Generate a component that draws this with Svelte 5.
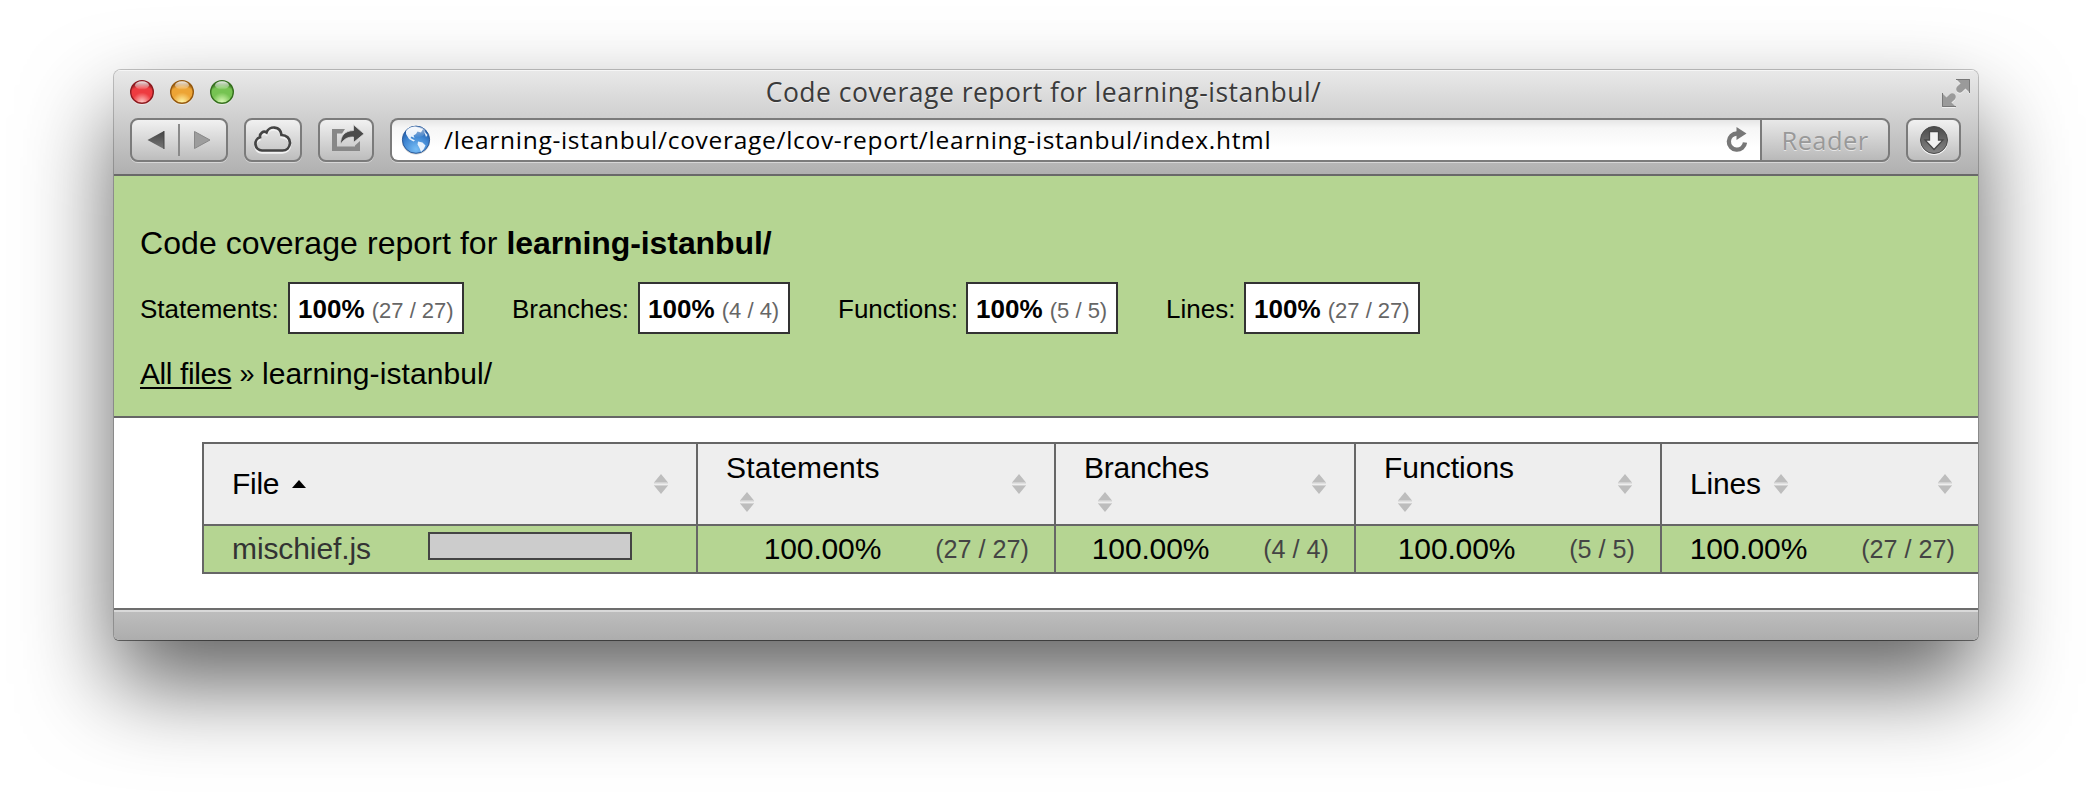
<script>
  const metrics = [
    { label: 'Statements', hits: '27 / 27', labelWidth: 148, boxWidth: 176 },
    { label: 'Branches', hits: '4 / 4', labelWidth: 126, boxWidth: 152 },
    { label: 'Functions', hits: '5 / 5', labelWidth: 128, boxWidth: 152 },
    { label: 'Lines', hits: '27 / 27', labelWidth: 78, boxWidth: 176 }
  ];
  const lights = [
    { name: 'red', edge: '#8c1a1f', main: '#ee3b40', glow: '#ffc9c6' },
    { name: 'amber', edge: '#95590f', main: '#eda435', glow: '#fff6a8' },
    { name: 'green', edge: '#36701f', main: '#76c352', glow: '#dcfbb8' }
  ];
</script>

{#snippet sorter()}
  <svg class="sorter" width="14" height="20" viewBox="0 0 14 20">
    <path d="M7 0 14 8.6H0zM0 11.6h14L7 20z" fill="#bdbdbd" />
    <path d="M0 8h14v1.6H0zM0 11h14v1H0z" fill="#d2d2d2" />
  </svg>
{/snippet}

<div class="desktop">
  <div class="window">
    <div class="chrome">
      <div class="titlebar">
        <div class="lights">
          {#each lights as l}
            <svg width="26" height="26" viewBox="0 0 26 26">
              <defs>
                <radialGradient id="g-{l.name}" cx=".5" cy=".95" r=".85">
                  <stop offset="0" stop-color={l.glow} />
                  <stop offset=".5" stop-color={l.main} />
                  <stop offset=".8" stop-color={l.main} />
                  <stop offset="1" stop-color={l.edge} />
                </radialGradient>
                <linearGradient id="s-{l.name}" x2="0" y2="1">
                  <stop offset="0" stop-color="#fff" stop-opacity=".9" />
                  <stop offset="1" stop-color="#fff" stop-opacity=".08" />
                </linearGradient>
              </defs>
              <circle cx="13" cy="14" r="12" fill="#fff" opacity=".45" />
              <circle cx="13" cy="13" r="11.3" fill="url(#g-{l.name})" stroke={l.edge} stroke-width="1.4" />
              <ellipse cx="13" cy="6.3" rx="7" ry="4" fill="url(#s-{l.name})" />
            </svg>
          {/each}
        </div>
        <div class="title">Code coverage report for learning-istanbul/</div>
        <svg class="expand" width="28" height="29" viewBox="0 0 28 29">
          <path d="M14 1h14v14l-4.5-4.5-3.4 3.3c-2 1.7-4.6.6-5.5-1-.7-1.5-.4-3 .7-4.2l3.3-3.2zM0 15l4.5 4.5 3.4-3.3c2-1.7 4.6-.6 5.5 1 .7 1.5.4 3-.7 4.2L9.4 24.6 14 29H0z" fill="#eee" />
          <path d="M14 0h14v14l-4.5-4.5-3.4 3.3c-2 1.7-4.6.6-5.5-1-.7-1.5-.4-3 .7-4.2l3.3-3.2zM0 14l4.5 4.5 3.4-3.3c2-1.7 4.6-.6 5.5 1 .7 1.5.4 3-.7 4.2L9.4 23.6 14 28H0z" fill="#9a9a9a" />
          <path d="M14 .5h13.5V14M.5 14v13.5H14" fill="none" stroke="#777" />
        </svg>
      </div>

      <div class="toolbar">
        <div class="btn nav">
          <svg width="94" height="40" viewBox="0 0 94 40">
            <defs>
              <linearGradient id="arrow" x2="0" y2="1"><stop stop-color="#444" /><stop offset="1" stop-color="#777" /></linearGradient>
            </defs>
            <path d="M15.5 20 32 11v18z" fill="url(#arrow)" />
            <path d="M32 11v18" stroke="#444" />
            <path d="M47 4v32" stroke="#8a8a8a" stroke-width="2" />
            <path d="M62.5 11.5 78 20l-15.5 8.5z" fill="#9d9d9d" stroke="#888" />
          </svg>
        </div>
        <div class="btn cloud">
          <svg width="40" height="30" viewBox="0 0 40 30">
            <path d="M9 26.5a6.8 6.8 0 0 1-2.5-13C6 9 10.500 6.500 13.500 8.500 16 1.500 27.500 1.500 28.500 11c5 .5 9 3.500 8.500 8.500-.4 4.500-3.500 7-7.500 7z" fill="none" stroke="#f2f2f2" stroke-width="2.5" transform="translate(0 1)" />
            <path d="M9 25.5a6.8 6.8 0 0 1-2-13.2C6.5 8 10.5 5.5 13.5 7.5 16 .5 27.5.5 28.5 10c5 0 8.5 3.5 8.5 8-.4 4.5-3.500 7.500-7.500 7.500z" fill="none" stroke="#444" stroke-width="2.7" />
          </svg>
        </div>
        <div class="btn share">
          <svg width="34" height="30" viewBox="0 0 34 30">
            <path d="M14 5H1v22h28V17l-5 4.500v1H6V9.500h5z" fill="#888" />
            <path d="M9.500 20.500C9.500 11 14 7 22.500 6.500V.8L33 9.800 22.500 18.500V13C16 13 13 15 9.500 20.500z" fill="#4b4b4b" stroke="#d8d8d8" stroke-width=".8" />
          </svg>
        </div>
        <div class="address">
          <div class="url">
            <svg class="globe" width="30" height="30" viewBox="0 0 30 30">
              <defs>
                <radialGradient id="sea" cx=".5" cy=".85" r=".8">
                  <stop offset="0" stop-color="#78bdf5" />
                  <stop offset=".6" stop-color="#3f86d2" />
                  <stop offset="1" stop-color="#1e57a5" />
                </radialGradient>
                <linearGradient id="shine" x2="0" y2="1"><stop stop-color="#fff" stop-opacity=".7" /><stop offset="1" stop-color="#fff" stop-opacity="0" /></linearGradient>
              </defs>
              <ellipse cx="15" cy="16" rx="14" ry="13.5" fill="#999" opacity=".5" />
              <circle cx="15" cy="14.7" r="13.6" fill="url(#sea)" stroke="#2c5c9c" />
              <path d="M5 6c3-3.500 6-4.500 9-4.500l8 2.500-2 3.500-3.500-1L15 9l-2.500 1.500 1 2.500-3-1.500-1 1.500 4.500 2.500-1.500 1-4.500-2.500-3-5zM17 16.500l4.500 1 3 3-2 4-2.500 2.500-1.500-4-2-3.500zM23 6l3.500 4-1.500 2z" fill="#f3f9ff" opacity=".93" />
              <ellipse cx="15" cy="7" rx="9.5" ry="5.5" fill="url(#shine)" />
            </svg>
            <span>/learning-istanbul/coverage/lcov-report/learning-istanbul/index.html</span>
            <svg class="reload" width="22" height="26" viewBox="0 0 22 26">
              <path d="M11 6.500A8.100 8.100 0 1 0 19 15.500" fill="none" stroke="#777" stroke-width="4.3" />
              <path d="M10.500 0 20.500 6.600 10.500 13z" fill="#777" />
            </svg>
          </div>
          <div class="reader">Reader</div>
        </div>
        <div class="btn download">
          <svg width="30" height="30" viewBox="0 0 30 30">
            <defs><linearGradient id="dl" x2="0" y2="1"><stop stop-color="#4a4a4a" /><stop offset="1" stop-color="#858585" /></linearGradient></defs>
            <circle cx="15" cy="16" r="14" fill="#f5f5f5" />
            <circle cx="15" cy="15" r="13.5" fill="url(#dl)" stroke="#4a4a4a" />
            <path d="M10.500 6.500h9v8.500H24L15 24.500 6 15h4.500z" fill="#f2f2f2" stroke="#484848" stroke-width="1.3" />
          </svg>
        </div>
      </div>
    </div>

    <div class="page">
      <header>
        <h1>Code coverage report for <b>learning-istanbul/</b></h1>
        <div class="metrics">
          {#each metrics as m}
            <div class="metric">
              <span class="label" style="width:{m.labelWidth}px">{m.label}:</span>
              <span class="box" style="width:{m.boxWidth}px"><b>100%{' '}</b><small>({m.hits})</small></span>
            </div>
          {/each}
        </div>
        <div class="crumbs"><a href="#all">All files</a><i>»</i><span>learning-istanbul/</span></div>
      </header>

      <div class="table">
        <div class="th">
          <span class="filehead">File</span>
          <svg class="asc" width="14" height="8" viewBox="0 0 14 8"><path d="M7 0 14 8H0z" /></svg>
          <div class="end">{@render sorter()}</div>
        </div>
        {#each metrics as m}
          <div class="th" class:wrap={m.label !== 'Lines'}>
            <div class="name"><span class={m.label}>{m.label}</span>{@render sorter()}</div>
            <div class="end">{@render sorter()}</div>
          </div>
        {/each}
        <div class="td file"><span>mischief.js</span><div class="bar"></div></div>
        {#each metrics as m}
          <div class="td"><span class="pct">100.00%</span><small>({m.hits})</small></div>
        {/each}
      </div>
    </div>
    <div class="status"></div>
  </div>
</div>

<style>
  :global(body) { background: #fff; overflow: hidden; }
  .desktop {
    box-sizing: border-box;
    width: 2092px;
    height: 798px;
    padding: 70px 114px 0;
    overflow: hidden;
    background: #fff;
    font-family: "Liberation Sans", Arial, sans-serif;
    color: #000;
  }
  svg { display: block; flex: none; }
  .window {
    display: flex;
    flex-direction: column;
    width: 1864px;
    height: 570px;
    border-radius: 7px 7px 5px 5px;
    overflow: hidden;
    box-shadow: 0 0 0 1px rgba(0, 0, 0, .22), 0 1px 0 rgba(0, 0, 0, .35), 0 44px 90px rgba(0, 0, 0, .62);
  }
  .chrome {
    box-sizing: border-box;
    height: 106px;
    border-bottom: 2px solid #696969;
    background: linear-gradient(#e9e9e9, #cdcdcd 50%, #b0b0b0);
    box-shadow: inset 0 1px 0 #f6f6f6;
    font-family: "Open Sans", "Noto Sans", sans-serif;
  }
  .titlebar {
    display: grid;
    grid-template-columns: 1fr auto 1fr;
    height: 48px;
    padding: 0 8px 0 15px;
  }
  .lights { display: flex; gap: 14px; padding-top: 9px; }
  .title {
    padding-right: 12px;
    font-size: 26.5px;
    line-height: 44px;
    letter-spacing: .49px;
    color: #3b3b3b;
    white-space: nowrap;
    text-shadow: 0 1px 0 rgba(255, 255, 255, .5);
  }
  .expand { justify-self: end; margin-top: 9px; }
  .toolbar { display: flex; height: 44px; padding: 0 17px 0 16px; }
  .btn {
    box-sizing: border-box;
    display: flex;
    align-items: center;
    justify-content: center;
    height: 44px;
    border: 2px solid #7b7b7b;
    border-radius: 8px;
    background: linear-gradient(#f1f1f1, #bdbdbd);
    box-shadow: 0 1px 0 rgba(255, 255, 255, .45);
  }
  .nav { width: 98px; margin-right: 16px; }
  .cloud { width: 58px; margin-right: 16px; }
  .share { width: 56px; margin-right: 16px; }
  .share svg { margin-left: 4px; margin-top: -2px; }
  .download { width: 55px; }
  .address { display: flex; flex: 1; margin-right: 16px; }
  .url {
    box-sizing: border-box;
    display: flex;
    flex: 1;
    align-items: center;
    height: 44px;
    padding: 0 12px 0 9px;
    border: 2px solid #7b7b7b;
    border-right: 0;
    border-radius: 8px 0 0 8px;
    background: linear-gradient(#e6e6e6, #f6f6f6 20%, #fff 70%);
    box-shadow: 0 1px 0 rgba(255, 255, 255, .45);
    white-space: nowrap;
  }
  .url span { flex: 1; margin: 0 0 0 13px; font-size: 24.5px; line-height: 36px; letter-spacing: .7px; }
  .reload { margin-top: -1px; }
  .reader {
    box-sizing: border-box;
    width: 130px;
    height: 44px;
    border: 2px solid #7b7b7b;
    border-radius: 0 8px 8px 0;
    background: linear-gradient(#e8e8e8, #b9b9b9);
    box-shadow: 0 1px 0 rgba(255, 255, 255, .45);
    font-size: 25.5px;
    line-height: 40px;
    letter-spacing: .4px;
    text-align: center;
    color: #999;
    text-shadow: 0 1px 0 #e6e6e6;
  }
  .page { height: 432px; background: #fff; white-space: nowrap; }
  header {
    box-sizing: border-box;
    height: 242px;
    padding: 47px 26px 0;
    border-bottom: 2px solid #666;
    background: #b5d592;
  }
  h1 { margin: 0 0 19px; font-size: 32px; line-height: 40px; font-weight: 400; letter-spacing: .07px; }
  h1 b { letter-spacing: -.08px; }
  .metrics { display: flex; gap: 48px; margin-bottom: 20px; }
  .metric { display: flex; height: 52px; font-size: 26px; line-height: 54px; }
  .box {
    box-sizing: border-box;
    height: 52px;
    padding-left: 8px;
    border: 2px solid #333;
    background: #fff;
    line-height: 50px;
  }
  .box b { white-space: pre; }
  .box small { font-size: 22px; color: #666; }
  .crumbs { display: flex; font-size: 30px; line-height: 40px; }
  .crumbs a {
    width: 92px;
    color: #000;
    letter-spacing: -.4px;
    text-decoration-thickness: 2px;
    text-underline-offset: 3px;
  }
  .crumbs i { width: 30px; font-style: normal; font-size: 27px; text-align: center; }
  .crumbs span { letter-spacing: .1px; }
  .table {
    display: grid;
    grid-template-columns: 494px 358px 300px 306px 320px;
    grid-template-rows: 82px 48px;
    width: 1778px;
    margin: 24px 0 0 88px;
    border-bottom: 2px solid #666;
    font-size: 30px;
  }
  .th, .td {
    box-sizing: border-box;
    display: flex;
    align-items: center;
    border-left: 2px solid #666;
    border-top: 2px solid #666;
    line-height: 36px;
  }
  .th { padding: 0 28px; background: #eee; }
  .filehead { letter-spacing: -.3px; }
  .asc { margin-left: 13px; }
  .end { margin-left: auto; }
  .name { display: flex; align-items: center; gap: 13px; }
  .wrap .name { flex-direction: column; align-items: flex-start; align-self: flex-start; gap: 6px; padding-top: 6px; }
  .wrap .name .sorter { margin-left: 14px; }
  .Statements { letter-spacing: .2px; }
  .Branches, .Lines { letter-spacing: -.2px; }
  .td { justify-content: flex-end; gap: 54px; padding-right: 25px; background: #b5d592; }
  .pct { letter-spacing: -.15px; }
  .td small { font-size: 25.2px; color: #444; }
  .file { justify-content: flex-start; gap: 0; padding: 0 0 0 28px; color: #333; }
  .file span { width: 196px; letter-spacing: -.1px; }
  .bar {
    box-sizing: border-box;
    width: 204px;
    height: 28px;
    margin-bottom: 6px;
    border: 2px solid #444;
    background: #ccc;
  }
  .status {
    box-sizing: border-box;
    height: 32px;
    border-top: 2px solid #6d6d6d;
    background: linear-gradient(#bebebe, #adadad);
    box-shadow: inset 0 2px 0 #d9d9d9;
  }
</style>
